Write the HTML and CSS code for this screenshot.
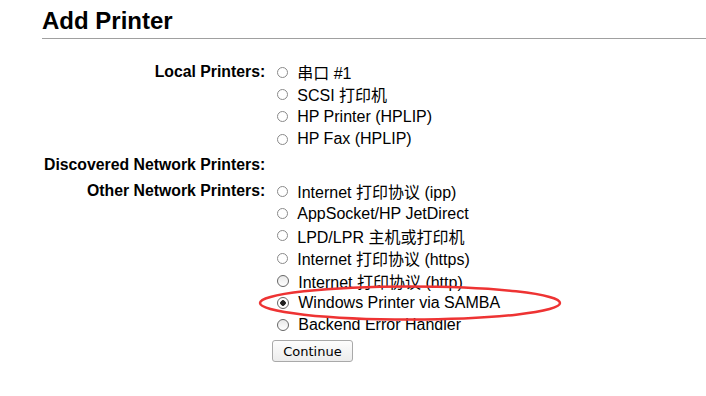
FILE: index.html
```html
<!DOCTYPE html>
<html lang="en">
<head>
    <meta charset="UTF-8">
    <meta name="viewport" content="width=device-width, initial-scale=1.0">
    <title>Add Printer</title>
    <link rel="stylesheet" href="styles.css">
</head>
<body>
    <div class="page">
        <h1>Add Printer</h1>
        <form class="printer-form">
            <div class="label">Local Printers:</div>
            <div class="options">
                <label class="option"><input type="radio" name="device"> 串口 #1</label>
                <label class="option"><input type="radio" name="device"> SCSI 打印机</label>
                <label class="option"><input type="radio" name="device"> HP Printer (HPLIP)</label>
                <label class="option"><input type="radio" name="device"> HP Fax (HPLIP)</label>
            </div>

            <div class="label">Discovered Network Printers:</div>
            <div class="options"></div>

            <div class="label">Other Network Printers:</div>
            <div class="options">
                <label class="option"><input type="radio" name="device"> Internet 打印协议 (ipp)</label>
                <label class="option"><input type="radio" name="device"> AppSocket/HP JetDirect</label>
                <label class="option"><input type="radio" name="device"> LPD/LPR 主机或打印机</label>
                <label class="option"><input type="radio" name="device"> Internet 打印协议 (https)</label>
                <label class="option"><input type="radio" name="device" class="dark"> Internet 打印协议 (http)</label>
                <label class="option"><input type="radio" name="device" class="dark" checked> Windows Printer via SAMBA</label>
                <label class="option"><input type="radio" name="device" class="dark"> Backend Error Handler</label>
                <div class="actions"><button type="button">Continue</button></div>
            </div>
        </form>

        <svg class="highlight" width="310" height="42" viewBox="0 0 310 42">
            <ellipse cx="155" cy="21" rx="150" ry="16.5" fill="none" stroke="#ee3333" stroke-width="2.5"/>
        </svg>
    </div>
</body>
</html>
```

FILE: styles.css
```css
body {
    font-family: "Liberation Sans", Arial, "Noto Sans CJK SC", sans-serif;
    background-color: #fff;
    color: #000;
    margin: 0;
}
.page {
    position: relative;
    padding-left: 42px;
}
h1 {
    margin: 0;
    padding: 7px 0 3px 0;
    font-size: 24px;
    line-height: 28px;
    font-weight: bold;
    border-bottom: 1px solid #a0a0a0;
}
.printer-form {
    display: grid;
    grid-template-columns: max-content auto;
    column-gap: 12px;
    row-gap: 4px;
    margin: 22px 0 0 2px;
    font-size: 16px;
}
.label {
    font-size: 15.8px;
    font-weight: bold;
    text-align: right;
    line-height: 22px;
    white-space: nowrap;
}
.option {
    display: flex;
    align-items: center;
    gap: 9px;
    height: 22.3px;
    white-space: nowrap;
}
.option input {
    appearance: none;
    margin: 0;
    width: 11px;
    height: 11px;
    border: 1px solid #8a8a8a;
    border-radius: 50%;
    background: #fff;
    box-sizing: border-box;
}
.option input.dark {
    width: 12px;
    height: 12px;
    border-color: #666;
    background: linear-gradient(#e8e8e8, #fff);
}
.option input:checked {
    background: radial-gradient(circle, #222 0 2.5px, #fff 3px);
}
.actions {
    padding-top: 4px;
    margin-left: -5px;
}
.actions button {
    font-family: "DejaVu Sans", sans-serif;
    font-size: 13px;
    height: 22px;
    padding: 0 10px;
    color: #000;
    background: linear-gradient(#fdfdfd, #ececec);
    border: 1px solid #a9a9a9;
    border-radius: 3px;
}
.highlight {
    position: absolute;
    left: 255px;
    top: 282px;
}
```
